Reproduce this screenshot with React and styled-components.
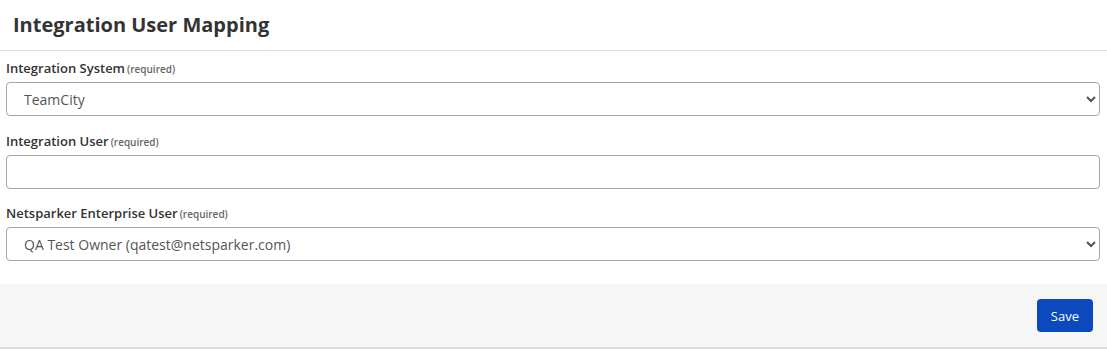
import styled, { createGlobalStyle } from "styled-components";

const GlobalStyle = createGlobalStyle`
  body {
    margin: 0;
    background: #fff;
    font-family: "Open Sans", "Liberation Sans", sans-serif;
    color: #333;
  }
`;

const Panel = styled.div`
  display: flex;
  flex-direction: column;
  width: 1107px;
`;

const Header = styled.div`
  height: 50px;
  display: flex;
  align-items: center;
  padding: 0 13px;
  border-bottom: 1px solid #dedede;
`;

const Title = styled.h2`
  margin: 0;
  font-size: 20px;
  font-weight: 700;
  color: #333;
  margin-top: -1px;
`;

const Form = styled.div`
  display: flex;
  flex-direction: column;
  gap: 14.5px;
  padding: 7px 7px 23px 6px;
`;

const Field = styled.div`
  display: flex;
  flex-direction: column;
`;

const Label = styled.label`
  display: flex;
  align-items: baseline;
  gap: 2px;
  height: 20px;
  overflow: hidden;
  font-size: 13px;
  font-weight: 600;
  color: #333;
  margin-bottom: 4px;
  line-height: 20px;
`;

const Required = styled.span`
  font-size: 10px;
  font-weight: 600;
  color: #666;
`;

const controlCss = `
  box-sizing: border-box;
  width: 100%;
  height: 34px;
  border: 1px solid #a6a6a6;
  border-radius: 4px;
  background: #fff;
  font-family: "Open Sans", "Liberation Sans", sans-serif;
  font-size: 14px;
  color: #555;
  padding: 0 16px;
  outline: none;
`;

const Select = styled.select`
  ${controlCss}
  padding-left: 13px;
`;

const Input = styled.input`
  ${controlCss}
`;

const Footer = styled.div`
  display: flex;
  justify-content: flex-end;
  align-items: center;
  height: 63px;
  padding: 0 14px;
  background: #f6f6f6;
  border-bottom: 2px solid #dcdcdc;
`;

const Button = styled.button`
  height: 33px;
  padding: 0 14px;
  border: none;
  border-radius: 4px;
  background: #0b49bd;
  color: #fff;
  font-family: "Open Sans", "Liberation Sans", sans-serif;
  font-size: 13px;
  cursor: pointer;
`;

export default function App() {
  return (
    <>
      <GlobalStyle />
      <Panel>
        <Header>
          <Title>Integration User Mapping</Title>
        </Header>
        <Form>
          <Field>
            <Label>
              Integration System<Required>(required)</Required>
            </Label>
            <Select defaultValue="teamcity">
              <option value="teamcity">TeamCity</option>
              <option value="jenkins">Jenkins</option>
            </Select>
          </Field>
          <Field>
            <Label>
              Integration User<Required>(required)</Required>
            </Label>
            <Input type="text" />
          </Field>
          <Field>
            <Label>
              Netsparker Enterprise User<Required>(required)</Required>
            </Label>
            <Select defaultValue="qa">
              <option value="qa">QA Test Owner (qatest@netsparker.com)</option>
            </Select>
          </Field>
        </Form>
        <Footer>
          <Button>Save</Button>
        </Footer>
      </Panel>
    </>
  );
}
